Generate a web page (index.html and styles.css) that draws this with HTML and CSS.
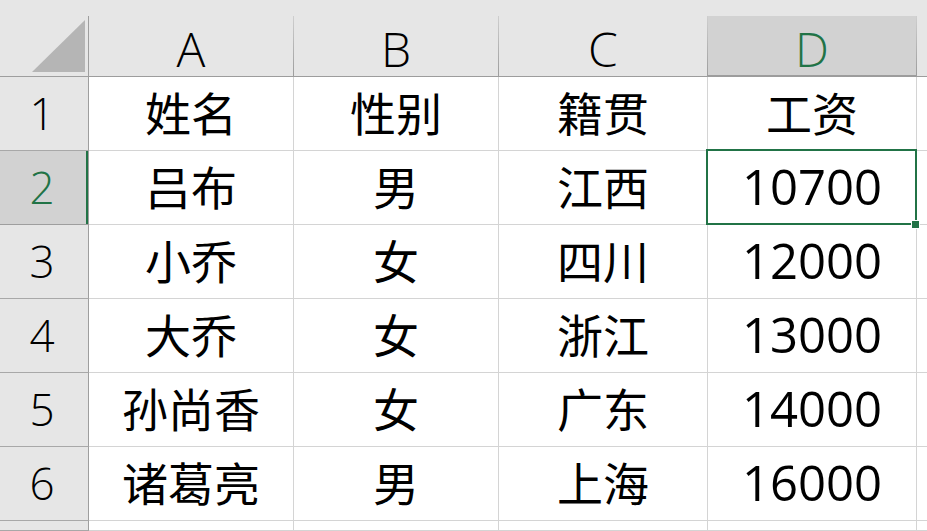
FILE: index.html
```html
<!DOCTYPE html>
<html lang="zh">
<head>
<meta charset="utf-8">
<link rel="stylesheet" href="styles.css">
</head>
<body>
<div class="sheet">
  <div class="strip"></div>

  <div class="corner"><div class="tri"></div></div>
  <div class="colhead">A</div>
  <div class="colhead">B</div>
  <div class="colhead">C</div>
  <div class="colhead sel">D</div>
  <div class="colhead last"></div>

  <div class="rowhead">1</div>
  <div class="cell">姓名</div>
  <div class="cell">性别</div>
  <div class="cell">籍贯</div>
  <div class="cell">工资</div>
  <div class="cell last"></div>

  <div class="rowhead sel">2</div>
  <div class="cell">吕布</div>
  <div class="cell">男</div>
  <div class="cell">江西</div>
  <div class="cell num active">10700<span class="handle"></span></div>
  <div class="cell last"></div>

  <div class="rowhead">3</div>
  <div class="cell">小乔</div>
  <div class="cell">女</div>
  <div class="cell">四川</div>
  <div class="cell num">12000</div>
  <div class="cell last"></div>

  <div class="rowhead">4</div>
  <div class="cell">大乔</div>
  <div class="cell">女</div>
  <div class="cell">浙江</div>
  <div class="cell num">13000</div>
  <div class="cell last"></div>

  <div class="rowhead">5</div>
  <div class="cell">孙尚香</div>
  <div class="cell">女</div>
  <div class="cell">广东</div>
  <div class="cell num">14000</div>
  <div class="cell last"></div>

  <div class="rowhead">6</div>
  <div class="cell">诸葛亮</div>
  <div class="cell">男</div>
  <div class="cell">上海</div>
  <div class="cell num">16000</div>
  <div class="cell last"></div>

  <div class="rowhead"></div>
  <div class="cell"></div>
  <div class="cell"></div>
  <div class="cell"></div>
  <div class="cell"></div>
  <div class="cell last"></div>
</div>
</body>
</html>
```

FILE: styles.css
```css
* { box-sizing: border-box; }
html, body {
  margin: 0;
  padding: 0;
  background: #ffffff;
  overflow: hidden;
}
.sheet {
  width: 927px;
  height: 531px;
  display: grid;
  grid-template-columns: 89px 205px 205px 209px 209px 1fr;
  grid-template-rows: 16px 61px repeat(6, 74px) 1fr;
  font-family: "Noto Sans CJK SC", "Noto Sans", sans-serif;
  font-size: 46px;
  color: #000;
  overflow: hidden;
}
.strip {
  grid-column: 1 / -1;
  background: #e6e6e6;
}
.corner {
  background: #e6e6e6;
  border-right: 1px solid #9e9e9e;
  border-bottom: 1px solid #9e9e9e;
  display: flex;
  align-items: flex-end;
  justify-content: flex-end;
  padding: 0 3px 4px 0;
}
.tri {
  width: 53px;
  height: 52px;
  background: #b5b5b5;
  clip-path: polygon(100% 0, 100% 100%, 0 100%);
}
.colhead {
  background: #e6e6e6;
  border-right: 1px solid #b0b0b0;
  border-image: linear-gradient(#cfcfcf, #9c9c9c) 1;
  border-bottom: 1px solid #9e9e9e;
  display: flex;
  align-items: center;
  justify-content: center;
  line-height: 1;
  padding-top: 6px;
  font-family: "Open Sans", "Noto Sans", sans-serif;
  font-weight: 300;
  font-size: 48px;
}
.colhead.sel {
  background: #d2d2d2;
  color: #217346;
  border-bottom: 2px solid #217346;
}
.colhead.last { border-right: none; }
.rowhead {
  background: #e6e6e6;
  border-right: 1px solid #9e9e9e;
  border-bottom: 1px solid #a8a8a8;
  display: flex;
  align-items: center;
  justify-content: center;
  line-height: 1;
  padding-right: 4px;
  padding-bottom: 2px;
  font-family: "Open Sans", "Noto Sans", sans-serif;
  font-weight: 300;
  font-size: 44px;
}
.rowhead.sel {
  background: #d2d2d2;
  color: #217346;
  box-shadow: inset -2px 0 0 #217346;
  border-bottom-color: #9e9e9e;
}
.cell {
  border-right: 1px solid #d4d4d4;
  border-bottom: 1px solid #d4d4d4;
  display: flex;
  align-items: center;
  justify-content: center;
  line-height: 1;
  padding-bottom: 6px;
}
.cell.num {
  font-family: "Open Sans", "Noto Sans", sans-serif;
  font-size: 49px;
  padding-bottom: 3px;
}
.cell.last { border-right: none; }
.cell.active { position: relative; }
.cell.active::after {
  content: "";
  position: absolute;
  left: -2px;
  top: -2px;
  right: -1px;
  bottom: -1px;
  border: 2px solid #217346;
}
.handle {
  position: absolute;
  right: -3px;
  bottom: -4px;
  width: 7px;
  height: 7px;
  background: #217346;
  border: 1px solid #fff;
  box-sizing: content-box;
  z-index: 2;
  margin: -1px;
}
```
